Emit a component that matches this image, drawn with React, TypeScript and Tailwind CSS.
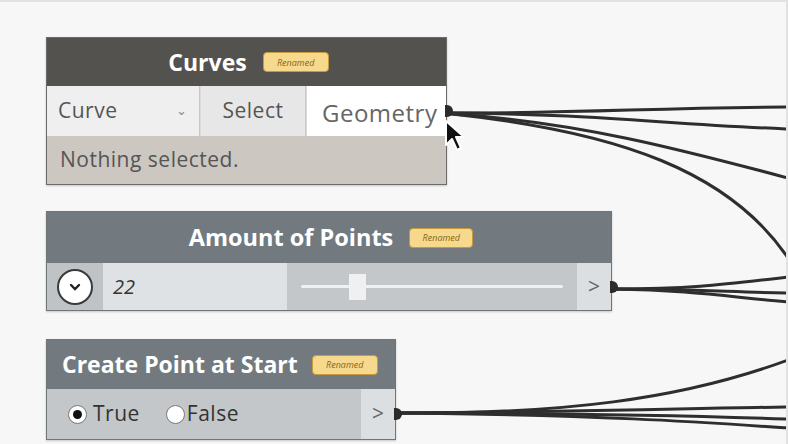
import React from "react";

const font = { fontFamily: '"Open Sans", "Noto Sans", sans-serif' };

const Renamed = ({ className = "" }: { className?: string }) => (
  <span
    className={`inline-flex items-center justify-center rounded-[4px] border border-[#c99a3c] bg-[#f6d98c] px-1 text-[9px] italic leading-none text-[#8a6418] ${className}`}
  >
    Renamed
  </span>
);

const Port = () => (
  <span className="absolute right-[-7px] top-1/2 h-[12px] w-[8px] -translate-y-1/2 rounded-r-full bg-[#2b2b2b]" />
);

const Wires = () => (
  <svg className="absolute inset-0" width="788" height="444" viewBox="0 0 788 444" fill="none">
    <g stroke="#2e2e2e" strokeWidth="3" strokeLinecap="round">
      <path d="M452 111 C 600 111, 640 106, 788 105" />
      <path d="M452 111 C 600 112, 660 122, 788 127" />
      <path d="M452 112 C 580 120, 690 150, 788 176" />
      <path d="M452 112 C 620 130, 730 170, 788 256" />
      <path d="M614 287 C 690 287, 720 283, 788 275" />
      <path d="M614 287 C 690 287, 730 290, 788 291" />
      <path d="M614 287 C 690 288, 730 295, 788 300" />
      <path d="M399 411 C 560 412, 680 398, 788 358" />
      <path d="M399 411 C 600 410, 700 406, 788 405" />
      <path d="M399 411 C 600 411, 700 414, 788 417" />
      <path d="M399 411 C 600 413, 700 420, 788 426" />
    </g>
  </svg>
);

const Cursor = () => (
  <svg className="absolute left-[444px] top-[117px]" width="26" height="38" viewBox="0 0 26 38">
    <path
      d="M2 2 L2 26 L8 20 L13 31 L17 29 L12 18 L20 18 Z"
      fill="#111"
      stroke="#fff"
      strokeWidth="2"
      strokeLinejoin="round"
    />
  </svg>
);

export default function App() {
  return (
    <div
      className="relative h-[444px] w-[788px] overflow-hidden border-t-2 border-r-2 border-[#e2e2e2] bg-[#f7f7f7]"
      style={font}
    >
      <Wires />

      {/* Curves node */}
      <div className="absolute left-[46px] top-[35px] w-[401px] border border-[#6b6b6b] shadow-[0_1px_2px_rgba(0,0,0,0.2)]">
        <div className="flex h-[48px] items-center justify-center gap-4 bg-[#53524f] pl-1">
          <span className="text-[23px] font-bold text-white">Curves</span>
          <Renamed className="h-[20px] w-[66px]" />
        </div>
        <div className="relative flex h-[50px] bg-[#dedad5] text-[21px] tracking-[0.5px] text-[#555]">
          <div className="flex w-[153px] items-center justify-between border-r border-[#c8c8c8] bg-[#efefef] pl-[11px] pr-[12px]">
            <span>Curve</span>
            <span className="text-[13px] text-[#888]">⌄</span>
          </div>
          <div className="mx-[1px] flex w-[105px] items-center justify-center border-r border-[#c8c8c8] bg-[#e7e7e7]">
            Select
          </div>
          <div className="flex flex-1 items-center bg-white pl-[15px] pt-[3px] text-[24px] text-[#666]">
            Geometry
          </div>
          <Port />
        </div>
        <div className="flex h-[48px] items-center bg-[#ccc7c1] pl-[13px] text-[21px] tracking-[0.5px] text-[#555]">
          Nothing selected.
        </div>
      </div>

      {/* Amount of Points node */}
      <div className="absolute left-[46px] top-[209px] w-[566px] border border-[#6f767a] shadow-[0_1px_2px_rgba(0,0,0,0.2)]">
        <div className="flex h-[51px] items-center justify-center gap-4 bg-[#727a7f] pl-1">
          <span className="text-[23.5px] font-bold text-white">Amount of Points</span>
          <Renamed className="h-[20px] w-[64px]" />
        </div>
        <div className="relative flex h-[47px]">
          <div className="flex w-[56px] items-center justify-center bg-[#bfc3c5]">
            <span className="flex h-[36px] w-[36px] items-center justify-center rounded-full border-2 border-[#3a3a3a] bg-white">
              <svg width="12" height="8" viewBox="0 0 12 8">
                <path d="M2 2 L6 6 L10 2" stroke="#222" strokeWidth="2.4" fill="none" strokeLinecap="round" />
              </svg>
            </span>
          </div>
          <div className="flex w-[184px] items-center bg-[#dee2e4] pl-[10px] text-[20px] italic text-[#333]">
            22
          </div>
          <div className="relative flex flex-1 items-center bg-[#c3c7c9] px-[14px]">
            <div className="h-[3px] w-full rounded bg-[#eef0f1]" />
            <div className="absolute left-[62px] top-[11px] h-[26px] w-[17px] bg-[#eef0f1]" />
          </div>
          <div className="flex w-[34px] items-center justify-center bg-[#dcdfe1] text-[21px] text-[#666]">
            &gt;
          </div>
          <Port />
        </div>
      </div>

      {/* Create Point at Start node */}
      <div className="absolute left-[46px] top-[337px] w-[350px] border border-[#6f767a] shadow-[0_1px_2px_rgba(0,0,0,0.2)]">
        <div className="flex h-[49px] items-center gap-[14px] bg-[#727a7f] pl-[15px]">
          <span className="text-[23px] font-bold text-white">Create Point at Start</span>
          <Renamed className="h-[20px] w-[66px]" />
        </div>
        <div className="relative flex h-[50px]">
          <div className="flex flex-1 items-center gap-[26px] bg-[#c3c7c9] pl-[21px] text-[21px] tracking-[0.5px] text-[#333]">
            <label className="flex items-center gap-[6px]">
              <span className="flex h-[19px] w-[19px] items-center justify-center rounded-full border border-[#777] bg-white">
                <span className="h-[9px] w-[9px] rounded-full bg-[#111]" />
              </span>
              True
            </label>
            <label className="flex items-center gap-[2px]">
              <span className="h-[19px] w-[19px] rounded-full border border-[#777] bg-white" />
              False
            </label>
          </div>
          <div className="flex w-[34px] items-center justify-center bg-[#dcdfe1] text-[21px] text-[#666]">
            &gt;
          </div>
          <Port />
        </div>
      </div>

      <Cursor />
    </div>
  );
}
